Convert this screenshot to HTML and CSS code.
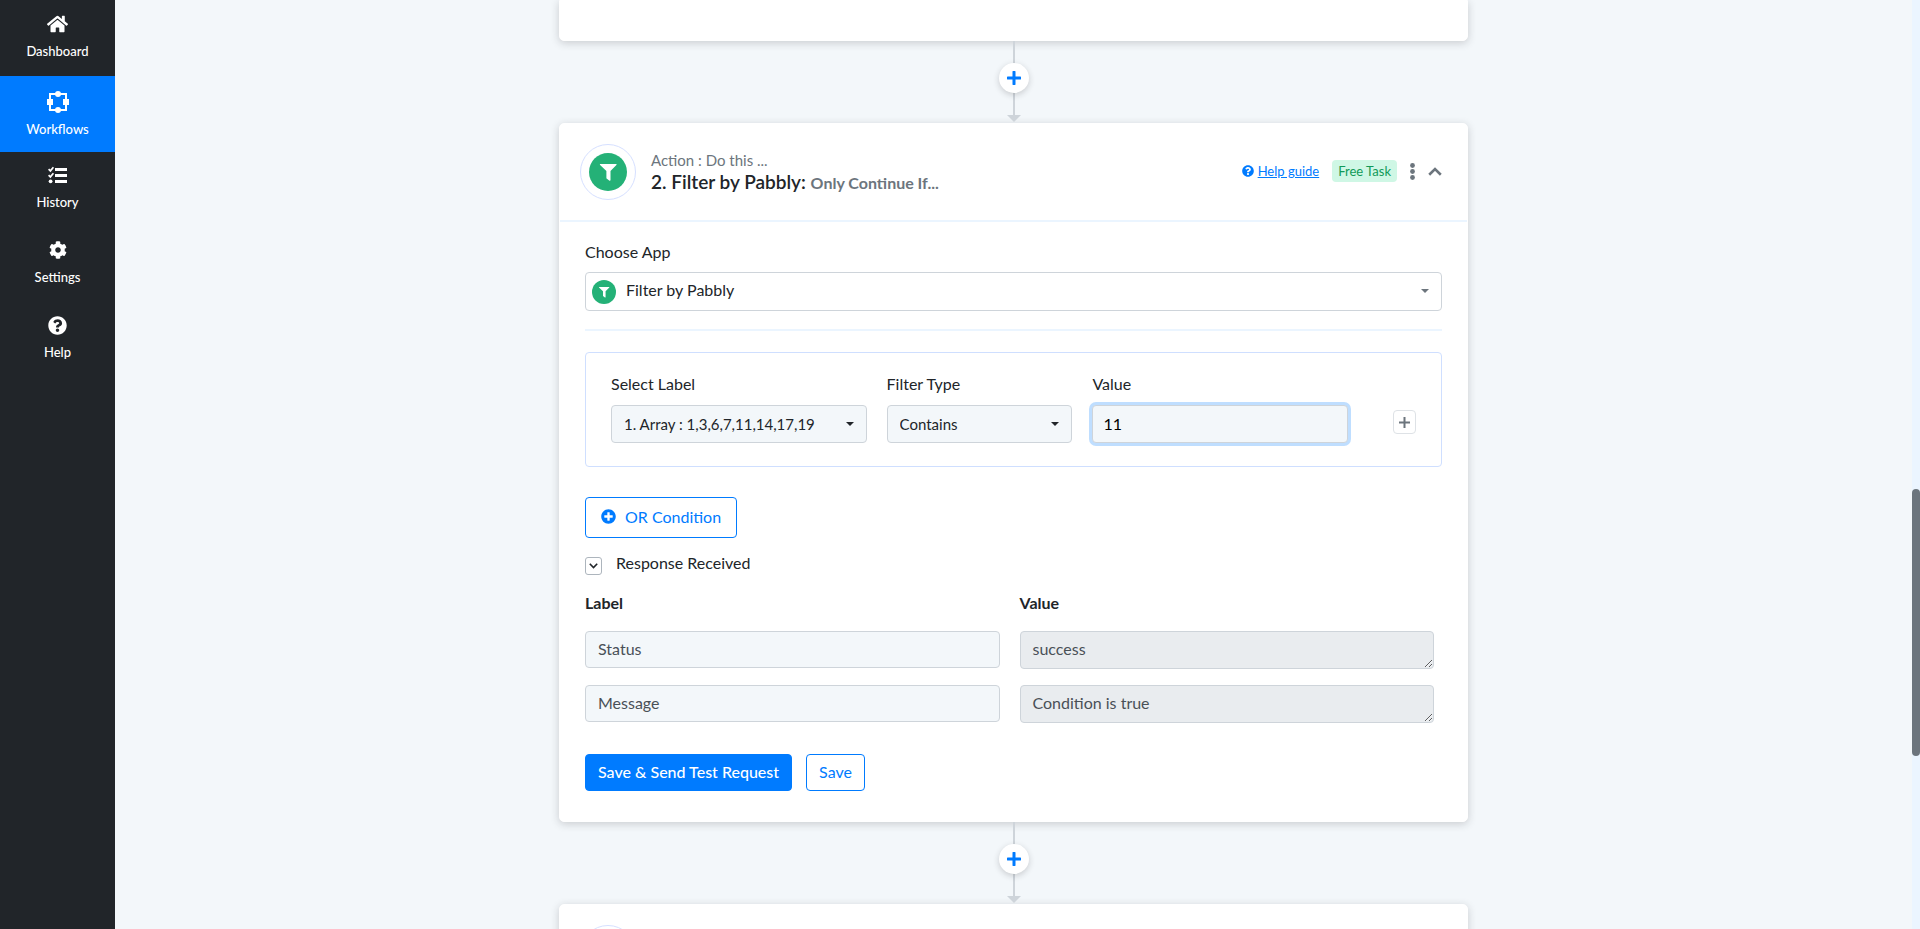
FILE: index.html
```html
<!DOCTYPE html>
<html lang="en">
<head>
    <meta charset="UTF-8">
    <meta name="viewport" content="width=device-width, initial-scale=1.0">
    <title>Workflows</title>
    <link rel="stylesheet" href="styles.css">
</head>
<body>
    <nav class="sidebar">
        <a href="#" class="nav-item">
            <svg width="21" height="20" viewBox="0 0 576 512"><path d="M280.37 148.26L96 300.11V464a16 16 0 0 0 16 16l112.06-.29a16 16 0 0 0 15.92-16V368a16 16 0 0 1 16-16h64a16 16 0 0 1 16 16v95.64a16 16 0 0 0 16 16.05L464 480a16 16 0 0 0 16-16V300L295.67 148.26a12.19 12.19 0 0 0-15.3 0zM571.6 251.47L488 182.56V44.05a12 12 0 0 0-12-12h-56a12 12 0 0 0-12 12v72.61L318.47 43a48 48 0 0 0-61 0L4.34 251.47a12 12 0 0 0-1.6 16.9l25.5 31A12 12 0 0 0 45.15 301l235.22-193.74a12.19 12.19 0 0 1 15.3 0L530.9 301a12 12 0 0 0 16.9-1.6l25.5-31a12 12 0 0 0-1.7-16.93z"/></svg>
            <span>Dashboard</span>
        </a>
        <a href="#" class="nav-item active">
            <svg width="22" height="22" viewBox="0 0 22 22"><path d="M3 3h16v16H3z" fill="none" stroke="#fff" stroke-width="2"/><path d="M0 8h6v6H0zM16 8h6v6h-6z"/><circle cx="11" cy="3" r="3"/><circle cx="11" cy="19" r="3"/></svg>
            <span>Workflows</span>
        </a>
        <a href="#" class="nav-item">
            <svg width="19" height="18" viewBox="0 0 19 18"><path d="M7 2h12v3H7zM7 8h12v3H7zM7 14h12v3H7z"/><circle cx="2.6" cy="15.3" r="1.9"/><path d="M.6 3.2l1.8 1.7L5.4 1.3M.6 9.2l1.8 1.7 3-3.6" fill="none" stroke="#fff" stroke-width="1.7"/></svg>
            <span>History</span>
        </a>
        <a href="#" class="nav-item">
            <svg width="18" height="18" viewBox="0 0 512 512"><path d="M487.4 315.7l-42.6-24.6c4.3-23.2 4.3-47 0-70.2l42.6-24.6c4.9-2.8 7.1-8.6 5.5-14-11.1-35.6-30-67.8-54.7-94.6-3.8-4.1-10-5.1-14.8-2.3L380.8 110c-17.9-15.4-38.5-27.3-60.8-35.1V25.8c0-5.6-3.9-10.5-9.4-11.7-36.7-8.2-74.3-7.8-109.2 0-5.5 1.2-9.4 6.1-9.4 11.7V75c-22.2 7.9-42.8 19.8-60.8 35.1L88.7 85.5c-4.9-2.8-11-1.9-14.8 2.3-24.7 26.7-43.6 58.9-54.7 94.6-1.7 5.4.6 11.2 5.5 14L67.3 221c-4.3 23.2-4.3 47 0 70.2l-42.6 24.6c-4.9 2.8-7.1 8.6-5.5 14 11.1 35.6 30 67.8 54.7 94.6 3.8 4.1 10 5.1 14.8 2.3l42.6-24.6c17.9 15.4 38.5 27.3 60.8 35.1v49.2c0 5.6 3.9 10.5 9.4 11.7 36.7 8.2 74.3 7.8 109.2 0 5.5-1.2 9.4-6.1 9.4-11.7v-49.2c22.2-7.9 42.8-19.8 60.8-35.1l42.6 24.6c4.9 2.8 11 1.9 14.8-2.3 24.7-26.7 43.6-58.9 54.7-94.6 1.5-5.5-.7-11.3-5.6-14.1zM256 336c-44.1 0-80-35.9-80-80s35.9-80 80-80 80 35.9 80 80-35.9 80-80 80z"/></svg>
            <span>Settings</span>
        </a>
        <a href="#" class="nav-item">
            <svg width="19" height="19" viewBox="0 0 512 512"><path d="M504 256c0 136.997-111.043 248-248 248S8 392.997 8 256C8 119.083 119.043 8 256 8s248 111.083 248 248zM262.655 90c-54.497 0-89.255 22.957-116.549 63.758-3.536 5.286-2.353 12.415 2.715 16.258l34.699 26.31c5.205 3.947 12.621 3.008 16.665-2.122 17.864-22.658 30.113-35.797 57.303-35.797 20.429 0 45.698 13.148 45.698 32.958 0 14.976-12.363 22.667-32.534 33.976C247.128 238.528 216 254.941 216 296v4c0 6.627 5.373 12 12 12h56c6.627 0 12-5.373 12-12v-1.333c0-28.462 83.186-29.647 83.186-106.667 0-58.002-60.165-102-116.531-102zM256 338c-25.365 0-46 20.635-46 46 0 25.364 20.635 46 46 46s46-20.636 46-46c0-25.365-20.635-46-46-46z"/></svg>
            <span>Help</span>
        </a>
    </nav>

    <main class="content">
        <section class="card card-prev"></section>

        <div class="connector">
            <button class="add-step" aria-label="Add step">
                <svg width="14" height="14" viewBox="0 0 14 14"><path d="M7 1v12M1 7h12" stroke="#007bff" stroke-width="3" stroke-linecap="round"/></svg>
            </button>
        </div>

        <section class="card">
            <header class="card-header">
                <div class="avatar">
                    <svg width="38" height="38" viewBox="0 0 38 38"><circle cx="19" cy="19" r="19" fill="#24b177"/><path d="M11.5 11h15.500c.6 0 .8.6.4 1L21.500 18v9c0 .7-.5 1-1 .7l-2.600-2c-.3-.2-.5-.4-.5-.8V18l-6.300-6c-.4-.4-.2-1 .4-1z" fill="#fff"/></svg>
                </div>
                <div class="titles">
                    <div class="subtitle">Action : Do this ...</div>
                    <h2 class="title">2. Filter by Pabbly: <span>Only Continue If...</span></h2>
                </div>
                <div class="tools">
                    <a href="#" class="help-link">
                        <svg width="12" height="12" viewBox="0 0 512 512"><path d="M504 256c0 136.997-111.043 248-248 248S8 392.997 8 256C8 119.083 119.043 8 256 8s248 111.083 248 248zM262.655 90c-54.497 0-89.255 22.957-116.549 63.758-3.536 5.286-2.353 12.415 2.715 16.258l34.699 26.31c5.205 3.947 12.621 3.008 16.665-2.122 17.864-22.658 30.113-35.797 57.303-35.797 20.429 0 45.698 13.148 45.698 32.958 0 14.976-12.363 22.667-32.534 33.976C247.128 238.528 216 254.941 216 296v4c0 6.627 5.373 12 12 12h56c6.627 0 12-5.373 12-12v-1.333c0-28.462 83.186-29.647 83.186-106.667 0-58.002-60.165-102-116.531-102zM256 338c-25.365 0-46 20.635-46 46 0 25.364 20.635 46 46 46s46-20.636 46-46c0-25.365-20.635-46-46-46z"/></svg>
                        <span>Help guide</span>
                    </a>
                    <span class="badge">Free Task</span>
                    <button class="icon-btn" aria-label="More">
                        <svg width="5" height="17" viewBox="0 0 5 17"><circle cx="2.500" cy="2.500" r="2.400"/><circle cx="2.500" cy="8.500" r="2.400"/><circle cx="2.500" cy="14.500" r="2.400"/></svg>
                    </button>
                    <button class="icon-btn" aria-label="Collapse">
                        <svg width="14" height="9" viewBox="0 0 14 9"><path d="M1.200 7.700L7 2l5.800 5.700" fill="none" stroke="#6c757d" stroke-width="2.600"/></svg>
                    </button>
                </div>
            </header>

            <div class="card-body">
                <label class="field-label" for="app">Choose App</label>
                <div class="select-wrap app-select">
                    <svg class="app-icon" width="24" height="24" viewBox="0 0 38 38"><circle cx="19" cy="19" r="19" fill="#24b177"/><path d="M11.5 11h15.500c.6 0 .8.6.4 1L21.500 18v9c0 .7-.5 1-1 .7l-2.600-2c-.3-.2-.5-.4-.5-.8V18l-6.300-6c-.4-.4-.2-1 .4-1z" fill="#fff"/></svg>
                    <select id="app"><option>Filter by Pabbly</option></select>
                </div>

                <hr class="divider">

                <div class="filter-box">
                    <div>
                        <label class="field-label" for="filter-label">Select Label</label>
                        <div class="select-wrap">
                            <select id="filter-label"><option>1. Array : 1,3,6,7,11,14,17,19</option></select>
                        </div>
                    </div>
                    <div>
                        <label class="field-label" for="filter-type">Filter Type</label>
                        <div class="select-wrap">
                            <select id="filter-type"><option>Contains</option></select>
                        </div>
                    </div>
                    <div>
                        <label class="field-label" for="filter-value">Value</label>
                        <input class="filter-value" id="filter-value" type="text" value="11">
                    </div>
                    <button class="add-filter" aria-label="Add filter">
                        <svg width="11" height="11" viewBox="0 0 11 11"><path d="M5.500 0v11M0 5.500h11" stroke="#6c757d" stroke-width="2"/></svg>
                    </button>
                </div>

                <button class="btn btn-outline btn-or">
                    <svg width="15" height="15" viewBox="0 0 512 512"><path d="M256 8C119 8 8 119 8 256s111 248 248 248 248-111 248-248S393 8 256 8zm144 276c0 6.600-5.400 12-12 12h-92v92c0 6.600-5.400 12-12 12h-56c-6.600 0-12-5.400-12-12v-92h-92c-6.600 0-12-5.400-12-12v-56c0-6.600 5.400-12 12-12h92v-92c0-6.600 5.400-12 12-12h56c6.600 0 12 5.400 12 12v92h92c6.600 0 12 5.400 12 12v56z"/></svg>
                    <span>OR Condition</span>
                </button>

                <div class="response-toggle">
                    <input type="checkbox" id="response" checked>
                    <svg class="tick" width="9" height="6" viewBox="0 0 9 6"><path d="M.8.8l3.700 3.700L8.200.8" fill="none" stroke="#212529" stroke-width="1.600"/></svg>
                    <label for="response">Response Received</label>
                </div>

                <div class="response">
                    <div class="response-head" id="head-label">Label</div>
                    <div class="response-head" id="head-value">Value</div>
                    <input type="text" value="Status" aria-labelledby="head-label">
                    <textarea readonly aria-labelledby="head-value">success</textarea>
                    <input type="text" value="Message" aria-labelledby="head-label">
                    <textarea readonly aria-labelledby="head-value">Condition is true</textarea>
                </div>

                <div class="actions">
                    <button class="btn btn-primary">Save &amp; Send Test Request</button>
                    <button class="btn btn-outline">Save</button>
                </div>
            </div>
        </section>

        <div class="connector">
            <button class="add-step" aria-label="Add step">
                <svg width="14" height="14" viewBox="0 0 14 14"><path d="M7 1v12M1 7h12" stroke="#007bff" stroke-width="3" stroke-linecap="round"/></svg>
            </button>
        </div>

        <section class="card">
            <header class="card-header">
                <div class="avatar"></div>
            </header>
        </section>
    </main>

    <div class="scroll-track"><div class="scroll-thumb"></div></div>
</body>
</html>
```
FILE: styles.css
```css
* {
    box-sizing: border-box;
}

body {
    display: flex;
    height: 100vh;
    margin: 0;
    overflow: hidden;
    background-color: #f3f7fa;
    color: #212529;
    font-family: Lato, "Liberation Sans", sans-serif;
    font-size: 16px;
    line-height: 22px;
}

svg {
    display: block;
    flex-shrink: 0;
    fill: currentColor;
}

button, input, select, textarea {
    margin: 0;
    font-family: inherit;
    font-size: inherit;
    line-height: inherit;
    color: inherit;
}

button {
    padding: 0;
    cursor: pointer;
}

/* sidebar */
.sidebar {
    flex: 0 0 115px;
    padding-top: 1px;
    background-color: #212529;
}

.nav-item {
    display: grid;
    grid-template-rows: 22px 18px;
    row-gap: 7px;
    align-items: center;
    justify-items: center;
    padding: 12px 0 16px;
    color: #fff;
    font-size: 13px;
    font-weight: 500;
    line-height: 18px;
    text-decoration: none;
}

.nav-item.active {
    padding: 15px 0 14px;
    background-color: #007bff;
}

/* workflow column */
.content {
    flex: 1;
    display: flex;
    flex-direction: column;
    align-items: center;
    overflow: hidden;
}

.card {
    flex-shrink: 0;
    width: 100%;
    max-width: 909px;
    border: 1px solid #fff;
    border-radius: 5px;
    background-color: #fff;
    box-shadow: 0 2px 8px rgba(33, 37, 41, 0.2);
}

.card-prev {
    height: 41px;
    border-radius: 0 0 5px 5px;
}

.connector {
    position: relative;
    flex-shrink: 0;
    display: flex;
    justify-content: center;
    height: 82px;
    padding-top: 22px;
}

.connector::before {
    content: "";
    position: absolute;
    top: 0;
    bottom: 8px;
    width: 2px;
    background-color: #ced4da;
}

.connector::after {
    content: "";
    position: absolute;
    bottom: 1px;
    border: 7px solid transparent;
    border-top-color: #ced4da;
    border-bottom: 0;
}

.add-step {
    position: relative;
    z-index: 1;
    display: flex;
    align-items: center;
    justify-content: center;
    width: 30px;
    height: 30px;
    border: 0;
    border-radius: 50%;
    background-color: #fff;
    box-shadow: 0 2px 6px rgba(33, 37, 41, 0.2);
}

.card-header {
    display: flex;
    align-items: center;
    padding: 20px 25px 20px 20px;
    border-bottom: 2px solid #ebf5ff;
}

.avatar {
    display: flex;
    align-items: center;
    justify-content: center;
    width: 56px;
    height: 56px;
    border: 1px solid #d6e0ff;
    border-radius: 50%;
}

.titles {
    flex: 1;
    margin-left: 15px;
    padding-bottom: 2px;
}

.subtitle {
    color: #6c757d;
    font-size: 15px;
}

.title {
    margin: 0;
    font-size: 19px;
    font-weight: 600;
}

.title span {
    color: #6c757d;
    font-size: 16px;
    font-weight: bold;
}

.tools {
    display: flex;
    align-items: center;
    gap: 13px;
    padding-bottom: 2px;
    font-size: 13px;
}

.help-link {
    display: flex;
    align-items: center;
    gap: 4px;
    color: #007bff;
    text-decoration: none;
}

.help-link span {
    text-decoration: underline;
}

.badge {
    padding: 0 6px;
    border-radius: 4px;
    background-color: #cff7e5;
    color: #119a58;
}

.icon-btn {
    border: 0;
    background: none;
    color: #6c757d;
}

/* card body */
.card-body {
    padding: 19px 25px 30px;
}

.field-label {
    display: block;
    margin-bottom: 9px;
}

.select-wrap {
    position: relative;
}

.select-wrap::after {
    content: "";
    position: absolute;
    top: 17px;
    right: 13px;
    border: 4px solid transparent;
    border-top-color: #212529;
    border-bottom: 0;
    pointer-events: none;
}

.select-wrap select {
    display: block;
    width: 100%;
    height: 38px;
    padding: 0 30px 0 12px;
    appearance: none;
    border: 1px solid #ced4da;
    border-radius: 4px;
    background-color: #f3f7fa;
    font-size: 15px;
}

.app-select::after {
    border-top-color: #6c757d;
}

.app-select select {
    height: 39px;
    padding: 0 30px 3px 40px;
    background-color: #fff;
    font-size: 16px;
}

.app-icon {
    position: absolute;
    top: 8px;
    left: 7px;
}

.divider {
    height: 2px;
    margin: 18px 0 21px;
    border: 0;
    background-color: #ebf5ff;
}

.filter-box {
    display: grid;
    grid-template-columns: 11fr 8fr 11fr 48px;
    gap: 20px;
    padding: 20px 25px 23px;
    border: 1px solid #cfdfff;
    border-radius: 4px;
}

.filter-box .field-label {
    margin-bottom: 10px;
}

.filter-value {
    display: block;
    width: 100%;
    height: 38px;
    padding: 0 10px 2px;
    border: 1px solid #ced4da;
    border-radius: 4px;
    outline: 0;
    background-color: #f3f7fa;
    box-shadow: 0 0 0 3px #bfdeff;
    color: #000;
}

.add-filter {
    display: flex;
    align-items: center;
    justify-content: center;
    align-self: end;
    justify-self: end;
    width: 23px;
    height: 24px;
    margin-bottom: 9px;
    border: 1px solid #dee2e6;
    border-radius: 4px;
    background-color: #fff;
}

.btn {
    height: 37px;
    padding: 0 12px 2px;
    border: 1px solid #007bff;
    border-radius: 4px;
}

.btn-primary {
    background-color: #007bff;
    color: #fff;
    font-weight: 500;
}

.btn-outline {
    background-color: #fff;
    color: #007bff;
}

.btn-or {
    display: flex;
    align-items: center;
    gap: 9px;
    height: 41px;
    margin-top: 30px;
    padding: 0 15px 2px;
}

.response-toggle {
    position: relative;
    display: flex;
    align-items: flex-end;
    gap: 14px;
    margin: 14px 0 18px;
}

.response-toggle input {
    width: 17px;
    height: 18px;
    margin-bottom: -1px;
    appearance: none;
    border: 1px solid #adb5bd;
    border-radius: 3px;
}

.tick {
    position: absolute;
    left: 4px;
    top: 11px;
    pointer-events: none;
}

.response {
    display: grid;
    grid-template-columns: 1fr 1fr;
    gap: 16px 20px;
    padding-right: 8px;
}

.response-head {
    margin-bottom: 1px;
    font-weight: bold;
}

.response input, .response textarea {
    width: 100%;
    height: 37px;
    padding: 0 12px 2px;
    border: 1px solid #ced4da;
    border-radius: 4px;
    background-color: #f3f7fa;
    color: #495057;
}

.response textarea {
    display: block;
    height: 38px;
    padding: 6px 12px;
    background-color: #e9ecef;
    overflow: hidden;
}

.actions {
    display: flex;
    gap: 14px;
    margin-top: 31px;
}

/* scrollbar */
.scroll-track {
    flex: 0 0 8px;
    background-color: #ebf5ff;
}

.scroll-thumb {
    position: relative;
    top: 52.6%;
    height: 28.8%;
    border-radius: 4px;
    background-color: #6c757d;
}
```
